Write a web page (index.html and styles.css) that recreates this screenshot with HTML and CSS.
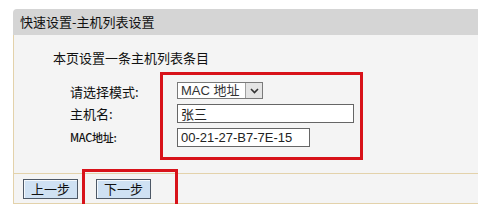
FILE: index.html
```html
<!DOCTYPE html>
<html>
<head>
  <meta charset="utf-8">
  <title>快速设置-主机列表设置</title>
  <link rel="stylesheet" href="styles.css">
</head>
<body>
  <div class="panel">
    <div class="head">快速设置-主机列表设置</div>
    <div class="main">
      <p class="intro">本页设置一条主机列表条目</p>
      <div class="form">
        <div class="labels">
          <div class="lbl sel">请选择模式:</div>
          <div class="lbl">主机名:</div>
          <div class="lbl mac">MAC地址:</div>
        </div>
        <div class="fields">
          <div class="fakeSelect">
            <span class="selText">MAC 地址</span>
            <span class="selArrow">
              <svg width="9" height="6" viewBox="0 0 9 6"><path d="M1 1 L4.5 4.5 L8 1" fill="none" stroke="#333" stroke-width="1.6"/></svg>
            </span>
          </div>
          <input class="txt wide" type="text" value="张三">
          <input class="txt" type="text" value="00-21-27-B7-7E-15">
        </div>
      </div>
    </div>
    <div class="foot">
      <button class="btn">上一步</button>
      <span class="mark">
        <button class="btn">下一步</button>
      </span>
    </div>
  </div>
</body>
</html>
```

FILE: styles.css
```css
body {
  margin: 0;
  background: #fff;
  font-family: "Noto Sans CJK SC", "Liberation Sans", sans-serif;
  font-size: 13px;
  color: #111;
}
.panel {
  margin: 9px 0 0 13px;
}
.head {
  height: 26px;
  line-height: 26px;
  padding-left: 7px;
  background-color: #d5d5d5;
  border-top-left-radius: 4px;
}
.main {
  background-color: #f4f4f4;
  border-left: 1px solid #e3d2ab;
  padding: 15px 0 13px 39px;
}
.intro {
  margin: 0 0 6px;
  line-height: 16px;
}
.form {
  display: flex;
}
.labels {
  width: 90px;
  margin-left: 17px;
  padding-top: 10px;
  display: flex;
  flex-direction: column;
  gap: 5px;
}
.lbl {
  height: 19px;
  line-height: 19px;
}
.lbl.sel {
  height: 17px;
  line-height: 19px;
}
.lbl.mac {
  font-size: 11px;
  font-weight: 500;
  letter-spacing: -0.3px;
}
.fields {
  width: 183px;
  border: 3px solid #d8121a;
  padding: 7px 0 10px 14px;
  display: flex;
  flex-direction: column;
  align-items: flex-start;
  gap: 5px;
}
.fakeSelect {
  display: flex;
  width: 86px;
  height: 17px;
  box-sizing: border-box;
  border: 1px solid #7a7a7a;
  background: #fff;
  font-family: "Liberation Sans", "Noto Sans CJK SC", sans-serif;
}
.selText {
  flex-grow: 1;
  line-height: 15px;
  padding-left: 3px;
  color: #333;
}
.selArrow {
  width: 16px;
  display: flex;
  align-items: center;
  justify-content: center;
  background-color: #e4e4e4;
  border-left: 1px solid #a0a0a0;
}
.txt {
  width: 133px;
  height: 19px;
  box-sizing: border-box;
  margin: 0;
  padding: 0 3px;
  border: 1px solid #666;
  background: #fff;
  font-family: "Liberation Sans", "Noto Sans CJK SC", sans-serif;
  font-size: 13px;
  color: #222;
  outline: none;
}
.txt.wide {
  width: 177px;
}
.foot {
  display: flex;
  gap: 18px;
  height: 29px;
  align-items: center;
  padding-left: 9px;
  background-color: #f4f4f4;
  border-left: 1px solid #e3d2ab;
  border-top: 1px solid #e3d2ab;
  border-bottom: 1px solid #e3d2ab;
}
.btn {
  width: 55px;
  height: 20px;
  margin: 0;
  padding: 0;
  border: 1px solid #4d5866;
  background-color: #cfe1f3;
  box-shadow: inset 1px 1px 0 #f4f8fc;
  font-family: "Noto Sans CJK SC", sans-serif;
  font-size: 13px;
  line-height: 17px;
  color: #111;
}
.mark {
  position: relative;
  display: flex;
}
.mark::after {
  content: '';
  position: absolute;
  left: -14px;
  top: -10px;
  right: -27px;
  bottom: -8px;
  border: 3px solid #d8121a;
  pointer-events: none;
}
```
